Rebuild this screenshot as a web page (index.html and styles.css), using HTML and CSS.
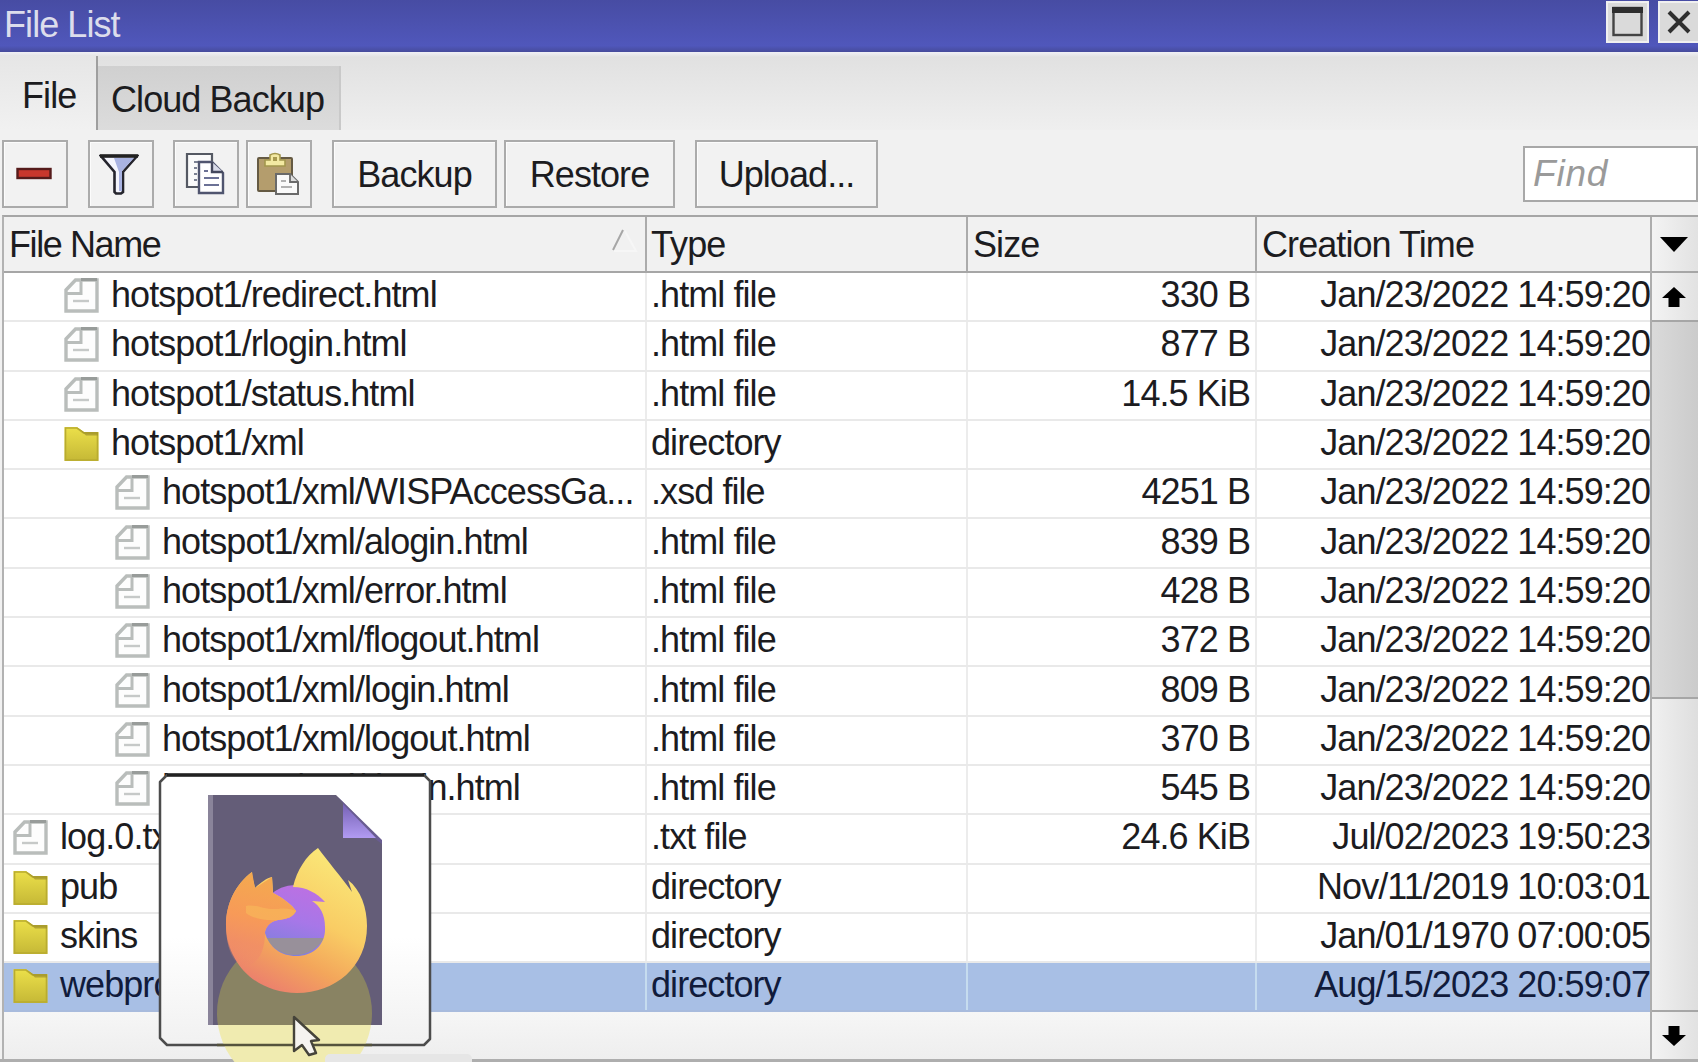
FILE: index.html
```html
<!DOCTYPE html>
<html lang="en">
<head>
<meta charset="utf-8">
<title>File List</title>
<link rel="stylesheet" href="styles.css">
</head>
<body>
<svg width="0" height="0" class="defs">
  <defs>
    <linearGradient id="gold" x1="0" y1="0" x2="0" y2="1"><stop offset="0" stop-color="#ece04a"/><stop offset="1" stop-color="#c5b836"/></linearGradient>
    <symbol id="file" viewBox="0 0 35 35">
      <path d="M11.500 2H33V33H2V12z" fill="#fdfdfd" stroke="#b9bdbb" stroke-width="3.400"/>
      <path d="M17 2V15.500H3" fill="none" stroke="#b9bdbb" stroke-width="3"/>
      <path d="M17 1.500H33" stroke="#989c9a" stroke-width="3"/>
      <path d="M9 23H25" stroke="#c6c9c8" stroke-width="2.400"/>
    </symbol>
    <symbol id="folder" viewBox="0 0 35 35">
      <path d="M.5 1H13L20 6H34.500V35H.5z" fill="url(#gold)"/>
      <path d="M1.500 34V2H13L19.500 7H33.500V34z" fill="none" stroke="#b9ac30" stroke-width="1.600"/>
      <path d="M14 2L20 6H34V9.500H22z" fill="#a1942b" opacity=".75"/>
    </symbol>
  </defs>
</svg>
<div class="window">
  <header class="titlebar">
    <h1>File List</h1>
    <button class="winbtn"><svg width="32" height="32" viewBox="0 0 32 32"><rect x="1.500" y="2" width="28" height="27" fill="#dadada" stroke="#444" stroke-width="2.400"/><path d="M0 4H31" stroke="#2e2e2e" stroke-width="6"/></svg></button>
    <button class="winbtn close"><svg width="24" height="24" viewBox="0 0 24 24"><path d="M2 2L22 22M22 2L2 22" stroke="#2f2f2f" stroke-width="4"/></svg></button>
  </header>
  <nav class="tabs">
    <div class="tab active">File</div>
    <div class="tab">Cloud Backup</div>
  </nav>
  <div class="toolbar">
    <button class="tool icon"><svg width="36" height="14" viewBox="0 0 36 14"><rect x="1.500" y="2" width="33" height="9" fill="#c8372d" stroke="#551b1b" stroke-width="2.400"/></svg></button>
    <button class="tool icon filter"><svg width="40" height="42" viewBox="0 0 40 42"><path d="M2 3H38L24 19V39L22 40.500H17L15.500 39V19z" fill="#f4f5fd" stroke="#25252d" stroke-width="2.600"/><path d="M15 5H35L23 18V38H20V19z" fill="#a9b3e2"/><path d="M1 3H39" stroke="#222" stroke-width="3.500"/></svg></button>
    <button class="tool icon copy"><svg width="40" height="44" viewBox="0 0 40 44"><path d="M2 2H27V35H2z" fill="#fafafa" stroke="#555963" stroke-width="2.200"/><path d="M9 10H13M9 16H12M9 22H12M9 28H12" stroke="#7c8293" stroke-width="1.800"/><path d="M14 10H27L38 21V41H14z" fill="#fff" stroke="#50556f" stroke-width="2.400"/><path d="M27 10V20H38" fill="#d8dae8" stroke="#44485d" stroke-width="2.400"/><path d="M19 19H23M19 26H34M19 33H34" stroke="#6b7195" stroke-width="2"/></svg></button>
    <button class="tool icon paste"><svg width="44" height="44" viewBox="0 0 44 44"><rect x="2" y="6" width="34" height="33" rx="1" fill="#b49d6d" stroke="#655a43" stroke-width="2"/><path d="M9 8H14V3Q19 0 24 3V8H29V14H9z" fill="#f3e9a2" stroke="#a3974e" stroke-width="1.600"/><path d="M17 5H21V9H17z" fill="#a89a50"/><path d="M20 22H34L42 30V42H20z" fill="#fafafa" stroke="#6a6a6a" stroke-width="2"/><path d="M34 22V30H42" fill="#ddd" stroke="#6a6a6a" stroke-width="1.800"/><path d="M25 29H30M25 35H36" stroke="#999" stroke-width="1.500"/></svg></button>
    <button class="tool backup">Backup</button>
    <button class="tool restore">Restore</button>
    <button class="tool upload">Upload...</button>
    <div class="find">Find</div>
  </div>
  <div class="listing">
    <div class="table">
      <div class="row head">
        <div class="cell">File Name<svg class="sort" width="30" height="24" viewBox="0 0 30 24"><path d="M3 21L13 1" stroke="#a6a6a6" stroke-width="2"/><path d="M15 2L26 22H4" fill="none" stroke="#f6f6f6" stroke-width="2"/></svg></div>
        <div class="cell">Type</div><div class="cell">Size</div><div class="cell">Creation Time</div>
      </div>
      <div class="row"><div class="cell l1"><svg class="ico"><use href="#file"/></svg>hotspot1/redirect.html</div><div class="cell">.html file</div><div class="cell">330 B</div><div class="cell">Jan/23/2022 14:59:20</div></div>
      <div class="row"><div class="cell l1"><svg class="ico"><use href="#file"/></svg>hotspot1/rlogin.html</div><div class="cell">.html file</div><div class="cell">877 B</div><div class="cell">Jan/23/2022 14:59:20</div></div>
      <div class="row"><div class="cell l1"><svg class="ico"><use href="#file"/></svg>hotspot1/status.html</div><div class="cell">.html file</div><div class="cell">14.5 KiB</div><div class="cell">Jan/23/2022 14:59:20</div></div>
      <div class="row"><div class="cell l1"><svg class="ico"><use href="#folder"/></svg>hotspot1/xml</div><div class="cell">directory</div><div class="cell"></div><div class="cell">Jan/23/2022 14:59:20</div></div>
      <div class="row"><div class="cell l2"><svg class="ico"><use href="#file"/></svg>hotspot1/xml/WISPAccessGa...</div><div class="cell">.xsd file</div><div class="cell">4251 B</div><div class="cell">Jan/23/2022 14:59:20</div></div>
      <div class="row"><div class="cell l2"><svg class="ico"><use href="#file"/></svg>hotspot1/xml/alogin.html</div><div class="cell">.html file</div><div class="cell">839 B</div><div class="cell">Jan/23/2022 14:59:20</div></div>
      <div class="row"><div class="cell l2"><svg class="ico"><use href="#file"/></svg>hotspot1/xml/error.html</div><div class="cell">.html file</div><div class="cell">428 B</div><div class="cell">Jan/23/2022 14:59:20</div></div>
      <div class="row"><div class="cell l2"><svg class="ico"><use href="#file"/></svg>hotspot1/xml/flogout.html</div><div class="cell">.html file</div><div class="cell">372 B</div><div class="cell">Jan/23/2022 14:59:20</div></div>
      <div class="row"><div class="cell l2"><svg class="ico"><use href="#file"/></svg>hotspot1/xml/login.html</div><div class="cell">.html file</div><div class="cell">809 B</div><div class="cell">Jan/23/2022 14:59:20</div></div>
      <div class="row"><div class="cell l2"><svg class="ico"><use href="#file"/></svg>hotspot1/xml/logout.html</div><div class="cell">.html file</div><div class="cell">370 B</div><div class="cell">Jan/23/2022 14:59:20</div></div>
      <div class="row"><div class="cell l2"><svg class="ico"><use href="#file"/></svg>hotspot1/xml/rlogin.html</div><div class="cell">.html file</div><div class="cell">545 B</div><div class="cell">Jan/23/2022 14:59:20</div></div>
      <div class="row"><div class="cell"><svg class="ico"><use href="#file"/></svg>log.0.txt</div><div class="cell">.txt file</div><div class="cell">24.6 KiB</div><div class="cell">Jul/02/2023 19:50:23</div></div>
      <div class="row"><div class="cell"><svg class="ico"><use href="#folder"/></svg>pub</div><div class="cell">directory</div><div class="cell"></div><div class="cell">Nov/11/2019 10:03:01</div></div>
      <div class="row"><div class="cell"><svg class="ico"><use href="#folder"/></svg>skins</div><div class="cell">directory</div><div class="cell"></div><div class="cell">Jan/01/1970 07:00:05</div></div>
      <div class="row selected"><div class="cell"><svg class="ico"><use href="#folder"/></svg>webproxy</div><div class="cell">directory</div><div class="cell"></div><div class="cell">Aug/15/2023 20:59:07</div></div>
      <div class="empty"></div>
    </div>
    <div class="scroll">
      <div class="menu"><svg width="28" height="15" viewBox="0 0 28 15"><path d="M0 0H28L14 15z"/></svg></div>
      <div class="arrow"><svg width="24" height="20" viewBox="0 0 24 20"><path d="M12 0L24 11H17.500V20H6.500V11H0z"/></svg></div>
      <div class="track"></div>
      <div class="thumb"></div>
      <div class="arrow down"><svg width="24" height="20" viewBox="0 0 24 20"><path d="M12 20L24 9H17.500V0H6.500V9H0z"/></svg></div>
    </div>
  </div>
  <div class="bottom"></div>
  <svg class="drag" width="280" height="296" viewBox="155 766 280 296">
    <defs>
      <linearGradient id="card" x1="0" y1="0" x2="0" y2="1"><stop offset=".6" stop-color="#fff"/><stop offset="1" stop-color="#f1f1f1"/></linearGradient>
      <linearGradient id="fire" gradientUnits="userSpaceOnUse" x1="345" y1="865" x2="275" y2="993"><stop offset="0" stop-color="#fae677"/><stop offset=".42" stop-color="#f9cc64"/><stop offset=".72" stop-color="#f3a65b"/><stop offset="1" stop-color="#ec806d"/></linearGradient>
      <linearGradient id="head" gradientUnits="userSpaceOnUse" x1="265" y1="880" x2="245" y2="966"><stop offset="0" stop-color="#f4a850"/><stop offset=".45" stop-color="#f79a58"/><stop offset=".75" stop-color="#f18c66" stop-opacity=".8"/><stop offset="1" stop-color="#ef8070" stop-opacity="0"/></linearGradient>
      <linearGradient id="globe" x1=".7" y1="0" x2=".4" y2="1"><stop offset="0" stop-color="#bd70e2"/><stop offset=".5" stop-color="#a777e8"/><stop offset="1" stop-color="#7d80dc"/></linearGradient>
      <linearGradient id="fold" x1="0" y1="0" x2="0" y2="1"><stop offset="0" stop-color="#7662b5"/><stop offset="1" stop-color="#b19bf2"/></linearGradient>
      <clipPath id="ball"><circle cx="295" cy="921" r="34"/></clipPath>
      <clipPath id="page"><path d="M208 795H336L382 842V1025H208z"/></clipPath>
    </defs>
    <path d="M167 775H424L430 781V1039L424 1045H167L160 1038V782z" fill="url(#card)" stroke="#4c4c4c" stroke-width="2.500" stroke-linejoin="round"/>
    <path d="M167 775H424" stroke="#222" stroke-width="3.500"/>
    <circle cx="294.500" cy="1013" r="77.500" fill="#f0ebb0"/>
    <path d="M217 1045H372" fill="none" stroke="#55533c" stroke-width="2.500"/>
    <path d="M208 795H336L382 842V1025H208z" fill="#645d78"/>
    <path d="M208 795H213V1025H208z" fill="#8a849a"/>
    <path d="M337 796L382 840V844L374 838H343V803z" fill="#695c91"/>
    <path d="M343 804L376 838H343z" fill="url(#fold)"/>
    <circle cx="294.500" cy="1013" r="77.500" fill="#898363" clip-path="url(#page)"/>
    <circle cx="295" cy="921" r="36" fill="url(#globe)"/>
    <rect x="255" y="938" width="80" height="25" fill="#98909a" clip-path="url(#ball)"/>
    <path d="M293 887C297 870 306 856 318 848C326 859 342 878 352 892L348 880C361 890 367 908 367 926C367 967 335 993 297 993C258 993 227 966 226 925C226 903 236 884 252 872C252 878 254 883 255 888C261 882 267 878 272 877L273 893C283 898 292 905 296 911C293 917 287 919 278 920C270 921 265 928 265 933C269 947 281 956 296 956C314 956 326 944 325 927C325 914 320 906 312 901L325 902C317 893 306 887 293 887z" fill="url(#fire)"/>
    <path d="M252 872L255 888 272 877 273 893C283 898 292 905 296 911C293 917 287 919 278 920C270 921 265 928 265 933C265 960 250 970 238 965C229 954 226 940 226 925C226 903 236 884 252 872z" fill="url(#head)"/>
    <path d="M246 906C258 904 263 910 278 909C285 908 291 909 296 911C293 917 287 919 278 920C265 921 252 918 246 913z" fill="#f8b75a" opacity=".7"/>
    <path d="M294 1017V1051L302 1045 309 1055 316 1053 311 1041 319 1040z" fill="#f5f3f0" stroke="#45433a" stroke-width="2.400" stroke-linejoin="round"/>
  </svg>
  <div class="tip"></div>
</div>
</body>
</html>
```
FILE: styles.css
```css
* { box-sizing: border-box; }
body {
  margin: 0;
  overflow: hidden;
  font: 36px/1 "Liberation Sans", Arial, sans-serif;
  letter-spacing: -.93px;
  color: #1c1c1f;
}
button { font: inherit; letter-spacing: inherit; color: inherit; padding: 0; }
.defs { position: absolute; }
.window {
  position: relative;
  display: flex;
  flex-direction: column;
  width: 1698px;
  height: 1062px;
  overflow: hidden;
  background: #f1f1f1;
}
.titlebar {
  display: flex;
  height: 52px;
  flex: none;
  padding-left: 4px;
  background: linear-gradient(#474ca3, #5057bb 88%, #464b9b);
}
.titlebar h1 {
  flex: 1;
  margin: 0;
  font-size: 36px;
  font-weight: 400;
  line-height: 50px;
  color: #dcddec;
}
.winbtn {
  display: grid;
  place-items: center;
  width: 43px;
  height: 42px;
  margin: 1px 9px 0 0;
  border: 2px solid #f0f0f0;
  background: #dadada;
}
.winbtn.close { width: 40px; margin-right: 0; border-right: 0; }
.tabs {
  display: flex;
  align-items: flex-end;
  flex: none;
  height: 78px;
  background: linear-gradient(#f0f0f6 0, #e1e1e1 5px, #efefef);
}
.tab {
  height: 64px;
  padding-left: 13px;
  width: 243px;
  line-height: 67px;
  background: linear-gradient(#d0d0d0, #dcdcdc);
  border-right: 2px solid #c9c9c9;
}
.tab.active {
  width: 98px;
  height: 74px;
  padding-left: 22px;
  line-height: 79px;
  background: linear-gradient(#e6e6e6, #f1f1f1);
  border-right: 2px solid #9f9f9f;
}
.toolbar {
  display: flex;
  flex: none;
  height: 85px;
  padding: 10px 0 0 2px;
}
.tool {
  height: 68px;
  padding-top: 2px;
  border: 2px solid #ababab;
  background: #f2f2f2;
  box-shadow: inset 1px 1px #fcfcfc;
}
.icon { display: grid; place-items: center; width: 66px; padding: 0 3px 0 0; }
.filter { margin-left: 20px; padding-right: 5px; }
.copy { margin-left: 19px; }
.paste { margin-left: 7px; }
.backup { width: 165px; margin-left: 20px; }
.restore { width: 171px; margin-left: 7px; }
.upload { width: 183px; margin-left: 20px; }
.find {
  width: 175px;
  height: 56px;
  margin: 6px 0 0 auto;
  padding-left: 8px;
  border: 2px solid #a8a8a8;
  background: #fff;
  font-size: 37px;
  font-style: italic;
  letter-spacing: .8px;
  line-height: 52px;
  color: #9a9a9a;
}
.listing {
  display: flex;
  flex: none;
  height: 844px;
  margin-left: 2px;
  border-top: 2px solid #a6a6a6;
  border-left: 2px solid #b2b2b2;
}
.table { display: flex; flex-direction: column; width: 1646px; }
.row {
  display: grid;
  grid-template-columns: 643px 321px 289px 393px;
  flex: none;
  height: 49.300px;
  background: #fff;
  border-bottom: 2px solid #e9e9e9;
}
.cell {
  display: flex;
  align-items: center;
  padding: 0 5px 0 4px;
  line-height: 44px;
  white-space: nowrap;
  border-right: 2px solid #ececec;
}
.row:not(.head) .cell { padding-bottom: 3px; }
.cell:first-child { padding-left: 9px; }
.cell.l1:first-child { padding-left: 60px; }
.cell.l2:first-child { padding-left: 111px; }
.cell:nth-child(3) { justify-content: flex-end; }
.cell:last-child { justify-content: flex-end; padding: 0; border-right: 0; }
.ico { width: 35px; height: 35px; margin: 1px 12px 0 0; flex: none; }
.row.head { height: 56px; background: #f1f1f1; border-bottom: 2px solid #a6a6a6; }
.head .cell { line-height: 50px; border-right: 2px solid #ababab; }
.head .cell, .head .cell:last-child { padding-top: 2px; }
.head .cell:first-child { padding: 2px 5px 0; letter-spacing: -1.400px; }
.head .cell:nth-child(3), .head .cell:last-child { justify-content: flex-start; padding-left: 5px; }
.head .cell:last-child { border: 0; }
.sort { margin: -8px 0 0 auto; }
.row.selected { background: #a8bfe5; border-bottom-color: #a8bbdd; color: #111b3b; }
.selected .cell { border-right-color: #c6dcef; }
.empty { flex: 1; background: linear-gradient(#f6f6f6, #eee); }
.scroll {
  display: flex;
  flex-direction: column;
  flex: 1;
  border-left: 2px solid #adadad;
  background: #ededed;
}
.menu, .arrow {
  display: grid;
  place-items: center;
  height: 56px;
  padding-right: 3px;
  border-bottom: 2px solid #a6a6a6;
  background: linear-gradient(90deg, #f3f3f3, #e2e2e2);
}
.arrow { height: 49px; }
.track { height: 377px; background: linear-gradient(90deg, #dadada, #cbcbcb); border-bottom: 2px solid #a6a6a6; }
.thumb { height: 313px; background: linear-gradient(90deg, #f0f0f0, #dedede); border-bottom: 2px solid #a6a6a6; }
.arrow.down { height: 47px; border: 0; }
.bottom { height: 3px; background: #aeaeae; }
.tip {
  position: absolute;
  left: 325px;
  top: 1054px;
  width: 147px;
  height: 12px;
  border-radius: 5px;
  background: #e6e6e6;
}
.drag { position: absolute; left: 155px; top: 766px; }
```
